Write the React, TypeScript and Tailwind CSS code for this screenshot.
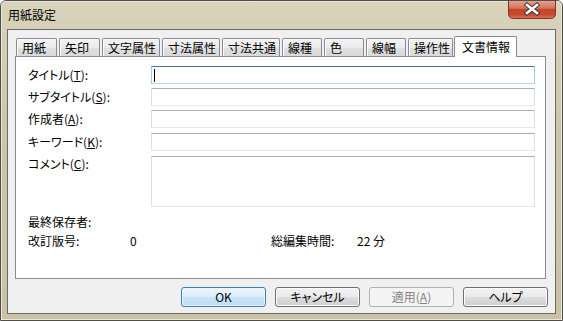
import React from 'react';

const tabs: { label: string; w: string }[] = [
  { label: '用紙', w: 'w-[41px]' },
  { label: '矢印', w: 'w-[41px]' },
  { label: '文字属性', w: 'w-[58px]' },
  { label: '寸法属性', w: 'w-[58px]' },
  { label: '寸法共通', w: 'w-[58px]' },
  { label: '線種', w: 'w-[40px]' },
  { label: '色', w: 'w-[40px]' },
  { label: '線幅', w: 'w-[40px]' },
  { label: '操作性', w: 'w-[45px]' },
];

function U({ children }: { children: React.ReactNode }) {
  return <span className="underline underline-offset-[1px]">{children}</span>;
}

function Field({ focused, h }: { focused?: boolean; h: string }) {
  if (focused) {
    return (
      <div
        className={`flex-1 ${h} border border-t-[#3d7bad] border-x-[#a4c9e3] border-b-[#b7d9ed] bg-white flex items-center`}
      >
        <div className="ml-[2px] w-[1px] h-[13px] bg-black" />
      </div>
    );
  }
  return (
    <div className={`flex-1 ${h} border border-t-[#abadb3] border-x-[#dbdfe6] border-b-[#e3e9ef] bg-white`} />
  );
}

function Btn({ children, kind }: { children: React.ReactNode; kind?: 'default' | 'disabled' }) {
  if (kind === 'default') {
    return (
      <div className="w-[85px] h-[20px] rounded-[3px] border border-[#3c7fb1] bg-[linear-gradient(to_bottom,#eef7fd_0%,#dcedfa_48%,#cbe5f7_52%,#bcdcf3_100%)] shadow-[inset_0_0_0_1px_#e8f5fd] flex items-center justify-center text-black">
        {children}
      </div>
    );
  }
  if (kind === 'disabled') {
    return (
      <div className="w-[85px] h-[20px] rounded-[3px] border border-[#adb2b5] bg-[#f4f4f4] flex items-center justify-center text-[#838383]">
        {children}
      </div>
    );
  }
  return (
    <div className="w-[85px] h-[20px] rounded-[3px] border border-[#707070] bg-[linear-gradient(to_bottom,#f2f2f2_0%,#ebebeb_48%,#dddddd_52%,#cfcfcf_100%)] shadow-[inset_0_0_0_1px_#fcfcfc] flex items-center justify-center text-black">
      {children}
    </div>
  );
}

export default function App() {
  return (
    <div className="w-[563px] h-[321px] bg-white font-['Noto_Sans_CJK_JP',sans-serif] [font-feature-settings:'palt'] text-[12px] leading-[16px] text-black">
      <div className="relative w-[563px] h-[321px] rounded-t-[6px] border border-[#4e4e4e] overflow-hidden">
        <div className="w-full h-full rounded-t-[5px] border border-[#ebe6d6] bg-[linear-gradient(to_bottom,#d9d3bc_0%,#cdc5a8_40%,#cbc2a4_100%)] flex flex-col px-[5px] pb-[5px]">
          {/* Title bar */}
          <div className="h-[27px] flex items-center pl-[1px] pb-[2px] shrink-0">
            <span className="text-[12px] text-black">用紙設定</span>
          </div>
          {/* Client area */}
          <div className="flex-1 border border-[#6a6a6a] bg-[#f0f0f0] flex flex-col">
            {/* Tabs */}
            <div className="mt-[6px] ml-[8px] h-[20px] flex items-end gap-[2px] relative z-10">
              {tabs.map((t) => (
                <div
                  key={t.label}
                  className={`${t.w} h-[18px] rounded-t-[2px] border border-b-0 border-[#898c95] bg-[linear-gradient(to_bottom,#f3f3f3_0%,#ececec_50%,#e0e0e0_52%,#d9d9d9_100%)] shadow-[inset_1px_1px_0_#fbfbfb] pl-[5px] flex items-center whitespace-nowrap`}
                >
                  {t.label}
                </div>
              ))}
              <div className="-ml-[1px] w-[63px] h-[21px] -mb-[1px] rounded-t-[2px] border border-b-0 border-[#898c95] bg-white pl-[7px] pt-[2px] flex items-start whitespace-nowrap">
                文書情報
              </div>
            </div>
            {/* Panel */}
            <div className="ml-[7px] w-[531px] h-[223px] border border-[#898c95] bg-white flex flex-col pr-[10px]">
              <div className="mt-[9px] flex items-center">
                <div className="w-[135px] pl-[12px]">タイトル(<U>T</U>):</div>
                <Field focused h="h-[18px]" />
              </div>
              <div className="mt-[4px] flex items-center">
                <div className="w-[135px] pl-[12px]">サブタイトル(<U>S</U>):</div>
                <Field h="h-[18px]" />
              </div>
              <div className="mt-[4px] flex items-center">
                <div className="w-[135px] pl-[12px]">作成者(<U>A</U>):</div>
                <Field h="h-[18px]" />
              </div>
              <div className="mt-[5px] flex items-center">
                <div className="w-[135px] pl-[12px]">キーワード(<U>K</U>):</div>
                <Field h="h-[18px]" />
              </div>
              <div className="mt-[5px] flex items-start">
                <div className="w-[135px] pl-[12px] pt-[0px]">コメント(<U>C</U>):</div>
                <Field h="h-[51px]" />
              </div>
              <div className="mt-[7px] pl-[12px]">最終保存者:</div>
              <div className="mt-[3px] pl-[12px] flex">
                <div className="w-[102px]">改訂版号:</div>
                <div className="w-[141px]">0</div>
                <div className="w-[86px]">総編集時間:</div>
                <div>22 分</div>
              </div>
            </div>
            {/* Buttons */}
            <div className="mt-[8px] pr-[7px] flex justify-end gap-[9px]">
              <Btn kind="default">OK</Btn>
              <Btn>キャンセル</Btn>
              <Btn kind="disabled">
                適用(<U>A</U>)
              </Btn>
              <Btn>ヘルプ</Btn>
            </div>
          </div>
        </div>
        {/* Close button */}
        <svg className="absolute right-[6px] top-[-1px]" width="48" height="19" viewBox="0 0 48 19">
          <defs>
            <linearGradient id="cg" x1="0" y1="0" x2="0" y2="1">
              <stop offset="0" stopColor="#e9a796" />
              <stop offset="0.45" stopColor="#d4735b" />
              <stop offset="0.5" stopColor="#c4442b" />
              <stop offset="0.8" stopColor="#c74a30" />
              <stop offset="1" stopColor="#de7a5c" />
            </linearGradient>
          </defs>
          <path d="M0.5 0 V13.5 Q0.5 18.5 5.5 18.5 H42.5 Q47.5 18.5 47.5 13.5 V0" fill="url(#cg)" stroke="#7a3528" />
          <path d="M1.5 0.5 H46.5" stroke="#f0c2b6" strokeWidth="1" />
          <g strokeLinecap="square">
            <path d="M19 5 L29 13 M29 5 L19 13" stroke="#3b3b3b" strokeWidth="4.6" />
            <path d="M19 5 L29 13 M29 5 L19 13" stroke="#ffffff" strokeWidth="2.6" />
          </g>
        </svg>
      </div>
    </div>
  );
}
